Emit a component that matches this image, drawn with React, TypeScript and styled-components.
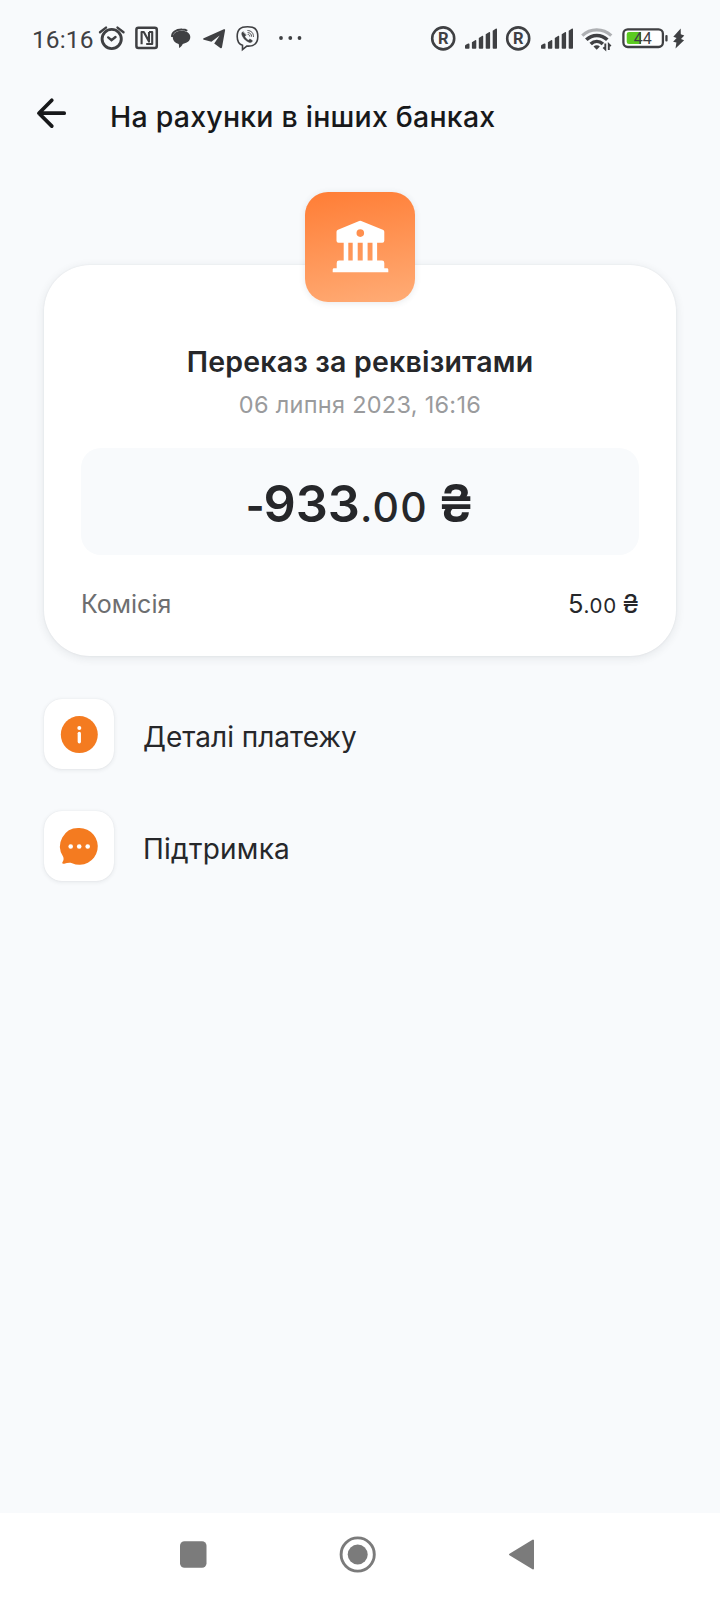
import React from "react";
import styled, { createGlobalStyle } from "styled-components";

const GlobalStyle = createGlobalStyle`
  * { box-sizing: border-box; }
  body { margin: 0; background: #f8fafc; }
`;

const INK = "#3f4043";

const Screen = styled.div`
  display: flex;
  flex-direction: column;
  width: 720px;
  height: 1600px;
  background: #f8fafc;
  font-family: Inter, "Open Sans", sans-serif;
  color: #26272a;
  white-space: nowrap;
`;

const StatusBar = styled.header`
  display: flex;
  height: 76px;
  padding: 24px 34px 0 32px;
  justify-content: space-between;
`;

const StatusGroup = styled.div`
  display: flex;
  align-items: flex-start;
`;

const Clock = styled.span`
  width: 66px;
  padding-top: 1px;
  font: 400 24.5px/29px Roboto, sans-serif;
  letter-spacing: 0.1px;
  color: ${INK};
`;

const Glyph = styled.svg<{ $gap?: number }>`
  display: block;
  flex: none;
  overflow: visible;
  margin-left: ${(p) => p.$gap ?? 0}px;
`;

const AppBar = styled.nav`
  display: flex;
  align-items: flex-start;
  height: 116px;
  padding: 20px 36px 0;
`;

const BackButton = styled.button`
  width: 74px;
  height: 36px;
  padding: 0;
  border: 0;
  background: none;
`;

const PageTitle = styled.h1`
  margin: 3px 0 0;
  font-size: 28.5px;
  line-height: 36px;
  font-weight: 540;
  letter-spacing: 0.22px;
  color: #17181a;
`;

const Content = styled.main`
  flex: 1;
  display: flex;
  flex-direction: column;
  padding: 0 44px;
`;

const BankTile = styled.div`
  align-self: center;
  position: relative;
  z-index: 1;
  width: 110px;
  height: 110px;
  margin-bottom: -37px;
  border-radius: 23px;
  background: linear-gradient(170deg, #ff7d35, #ffac76);
  box-shadow: 0 1px 6px rgba(60, 70, 90, 0.12);
`;

const Card = styled.section`
  display: flex;
  flex-direction: column;
  height: 391px;
  padding: 79px 37px 0;
  border-radius: 46px;
  background: #fff;
  box-shadow: 0 2px 10px rgba(40, 45, 60, 0.1), 0 0 2px rgba(40, 45, 60, 0.08);
`;

const CardTitle = styled.h2`
  margin: 0;
  text-align: center;
  font-size: 28.5px;
  line-height: 36px;
  font-weight: 600;
  letter-spacing: 0.2px;
`;

const DateLine = styled.p`
  margin: 10px 0 0;
  text-align: center;
  font-size: 23.5px;
  line-height: 30px;
  letter-spacing: 0.28px;
  color: #9a9b9d;
`;

const AmountBox = styled.div`
  display: flex;
  justify-content: center;
  align-items: baseline;
  height: 107px;
  margin-top: 28px;
  padding-top: 20px;
  border-radius: 20px;
  background: #f8fafc;
  line-height: 70px;
`;

const Minus = styled.span`
  position: relative;
  top: -2px;
  margin-right: -1px;
  font-size: 40px;
  font-weight: 700;
`;

const Money = styled.span<{ $size: number; $weight: number; $spacing?: number; $gap?: number }>`
  font-size: ${(p) => p.$size}px;
  font-weight: ${(p) => p.$weight};
  letter-spacing: ${(p) => p.$spacing ?? 0}px;
  margin-left: ${(p) => p.$gap ?? 0}px;
`;

const FeeRow = styled.div`
  display: flex;
  justify-content: space-between;
  align-items: baseline;
  margin-top: 31px;
  line-height: 36px;
`;

const FeeLabel = styled.span`
  font-size: 25px;
  color: #6d6e70;
`;

const FeeValue = styled.span`
  display: flex;
  align-items: baseline;
`;

const Actions = styled.ul`
  display: flex;
  flex-direction: column;
  gap: 41px;
  margin: 43px 0 0;
  padding: 0;
  list-style: none;
`;

const Action = styled.li`
  display: flex;
  align-items: center;
  gap: 29px;
  height: 70.5px;
`;

const ActionTile = styled.span`
  width: 70px;
  height: 70px;
  border-radius: 18px;
  background: #fff;
  box-shadow: 0 1px 4px rgba(40, 45, 60, 0.1), 0 0 1px rgba(40, 45, 60, 0.1);
`;

const ActionLabel = styled.span<{ $spacing: number }>`
  padding-top: 6px;
  font-size: 28px;
  line-height: 36px;
  letter-spacing: ${(p) => p.$spacing}px;
`;

const SystemNav = styled.footer`
  display: flex;
  height: 87px;
  padding: 22px 0 0 173px;
  background: #fff;
`;

const Registered = ({ gap }: { gap?: number }) => (
  <Glyph $gap={gap} width="27" height="28">
    <circle cx="14.2" cy="14.4" r="11" fill="none" stroke={INK} strokeWidth="2.6" />
    <text x="14.4" y="20.2" textAnchor="middle" fontFamily="Roboto" fontWeight="700" fontSize="16.5" fill={INK}>R</text>
  </Glyph>
);

const Signal = ({ gap }: { gap: number }) => (
  <Glyph $gap={gap} width="34" height="28" fill={INK}>
    <path d="M1 22q0-.8.8-1.300l2.400-1.200q1.300-.4 1.300 1V24q0 .8-.8.8H1.800Q1 24.800 1 24Z" />
    <path d="M7.900 18.200l3.600-2.200q.8-.2.800.8V24q0 .8-.8.8H8.700q-.8 0-.8-.8ZM14.800 14l3.600-2.200q.8-.2.800.8V24q0 .8-.8.8h-2.800q-.8 0-.8-.8ZM21.700 10.200l3.600-2.200q.8-.2.800.8V24q0 .8-.8.8h-2.800q-.8 0-.8-.8ZM28.700 6.800l3.400-2.200q.9-.2.900.8V24q0 .8-.8.8h-2.700q-.8 0-.8-.8Z" />
  </Glyph>
);

export default function App() {
  return (
    <Screen>
      <GlobalStyle />
      <StatusBar>
        <StatusGroup>
          <Clock>16:16</Clock>
          <Glyph width="28" height="28" fill="none" stroke={INK} strokeLinecap="round">
            <circle cx="13.7" cy="15" r="9.6" strokeWidth="2.9" />
            <path d="M2 8.2 8 3.6M19.5 3.6l6 4.6" strokeWidth="2.4" />
            <path d="m10.2 13.4 3.3 2.8 4-3.2" strokeWidth="2.4" />
          </Glyph>
          <Glyph $gap={8} width="26" height="28" fill="none" stroke={INK}>
            <rect x="2.400" y="3.700" width="20.400" height="20.200" rx="2" strokeWidth="2.500" />
            <path d="M7.600 20.300V8h2.200L15 17.600V8M15 8h3.200v12h-6" strokeWidth="2.100" strokeLinejoin="round" />
          </Glyph>
          <Glyph $gap={10} width="22" height="28">
            <path d="M2 13C1.500 8.600 6 5.300 12 5.500c2.300 0 4 .4 5.300 1.200" fill="none" stroke={INK} strokeWidth="1.800" />
            <path d="M11.500 6.800c5.300 0 8.800 2.600 8.800 6.300 0 4.300-3.800 6.200-7.600 6.800-.6 1.600-1.900 3.200-3.700 4.200.2-1.700 0-2.900-.3-4.200C5 19 2.800 16.600 2.800 13.300c0-3.900 3.700-6.500 8.700-6.500Z" fill={INK} />
          </Glyph>
          <Glyph $gap={10} width="24" height="28" fill={INK}>
            <path d="M1.700 14.200 21.800 5.300c.9-.4 1.500 0 1.300 1l-3.100 17c-.2 1.100-.9 1.300-1.700.7l-6.100-4.600 5.500-7.800-8.300 6.200-7.500-2c-1-.4-1-1.200-.2-1.600Z" />
          </Glyph>
          <Glyph $gap={8} width="26" height="28" fill="none" stroke={INK} strokeLinecap="round">
            <path d="M13.500 2.800c7.600 0 10.300 2.800 10.300 9.600s-2.900 9.600-9.300 9.700h-1.700l-4.300 3.500v-4.300C4.500 20 3.200 17.500 3.200 12.400c0-6.800 2.800-9.600 10.300-9.600Z" strokeWidth="1.600" />
            <path d="M8.700 7.800c-1.700 1.200-.9 3.200.1 5 1.500 2.700 3.800 4.600 6.800 5.700 1.700.6 3-1.200 2.700-1.900L15.900 15l-1.300 1.200c-1.600-.7-3-2-3.800-3.800l1.200-1.300Z" fill={INK} strokeWidth=".5" />
            <path d="M13.800 6.500c3.600.2 5.700 2.400 5.700 6M14 8.600c2.300.2 3.500 1.500 3.600 3.700M14.100 10.500c1.100.1 1.600.6 1.700 1.700" strokeWidth=".9" />
          </Glyph>
          <Glyph $gap={18} width="26" height="28" fill={INK}>
            <circle cx="3" cy="14" r="1.900" />
            <circle cx="12.300" cy="14" r="1.900" />
            <circle cx="21.500" cy="14" r="1.900" />
          </Glyph>
        </StatusGroup>
        <StatusGroup>
          <Registered />
          <Signal gap={8} />
          <Registered gap={6} />
          <Signal gap={9} />
          <Glyph $gap={7} width="32" height="28" fill="none" stroke={INK}>
            <path d="M1.300 11.700C9.300 3.900 22 3.900 30.300 11.700" stroke="#aeb0b3" strokeWidth="3.200" />
            <path d="M5.300 15.800c6-5.800 15-5.800 21 0M9.700 20c3.600-3.400 8.600-3.400 12.200 0" strokeWidth="3.600" />
            <path d="m12.500 22.500 3.200 3.200 3.200-3.200a4.500 4.500 0 0 0-6.400 0Z" fill={INK} stroke="none" />
            <path d="M24.300 19.500v5.800l-2-2M27.800 26v-5.800l2 2" strokeWidth="1.900" />
          </Glyph>
          <Glyph $gap={8} width="48" height="28">
            <rect x="2.400" y="5.300" width="39.500" height="17.700" rx="4.400" fill="#fff" stroke={INK} strokeWidth="2.300" />
            <path d="M8 8h12v12H8a2.300 2.300 0 0 1-2.300-2.300v-7.400A2.300 2.300 0 0 1 8 8Z" fill="#5bcb20" />
            <text x="21.800" y="20" textAnchor="middle" fontFamily="Roboto" fontSize="16" fill={INK}>44</text>
            <rect x="44.300" y="11" width="2.300" height="6.600" rx="1" fill={INK} />
          </Glyph>
          <Glyph $gap={3} width="14" height="28" fill={INK}>
            <path d="M8.700 4.500 1.300 12.800l3.300 1.200-3.500 3.700 3.300.9-.9 5.900 8.600-8.300-3.100-1.200 3.300-3.600-3.500-1.100Z" />
          </Glyph>
        </StatusGroup>
      </StatusBar>

      <AppBar>
        <BackButton aria-label="Назад">
          <Glyph width="34" height="36" fill="none" stroke="#17181a" strokeWidth="3.700" strokeLinecap="round" strokeLinejoin="round">
            <path d="M28.200 17.200H3.200M15.800 4.300 2.900 17.200l12.900 12.900" />
          </Glyph>
        </BackButton>
        <PageTitle>На рахунки в інших банках</PageTitle>
      </AppBar>

      <Content>
        <BankTile>
          <Glyph width="110" height="110" fill="#fff">
            <path fillRule="evenodd" d="M54.200 29.100q1-.5 2 0l21.600 8.600q1.500.6 1.500 2v9q0 2-2 2H33.500q-2 0-2-2v-9q0-1.400 1.500-2ZM55.300 37.300a3.800 3.800 0 1 0 0 7.600 3.800 3.800 0 0 0 0-7.600Z" />
            <path d="M38.700 49h4.600v21h-4.600zM47.700 49h5v21h-5zM57.700 49h4.900v21h-4.900zM67.500 49h4.600v21h-4.600z" />
            <path d="M34 68.600h43q2.300 0 2.300 2.400v5.300h2.700q1.300 0 1.300 1.300v2.700H27.700v-2.700q0-1.300 1.300-1.300h2.700V71q0-2.400 2.300-2.400Z" />
          </Glyph>
        </BankTile>
        <Card>
          <CardTitle>Переказ за реквізитами</CardTitle>
          <DateLine>06 липня 2023, 16:16</DateLine>
          <AmountBox>
            <Minus>-</Minus>
            <Money $size={50.5} $weight={600}>933</Money>
            <Money $size={41} $weight={540} $spacing={1.3}>.00</Money>
            <Money $size={51.5} $weight={600} $gap={10}>₴</Money>
          </AmountBox>
          <FeeRow>
            <FeeLabel>Комісія</FeeLabel>
            <FeeValue>
              <Money $size={25.5} $weight={400}>5</Money>
              <Money $size={20.5} $weight={400} $spacing={0.8}>.00</Money>
              <Money $size={26} $weight={400} $gap={5.5}>₴</Money>
            </FeeValue>
          </FeeRow>
        </Card>

        <Actions>
          <Action>
            <ActionTile>
              <Glyph width="70" height="70">
                <circle cx="35.300" cy="35.600" r="18.500" fill="#f47b20" />
                <circle cx="35.300" cy="29" r="2" fill="#fff" />
                <path d="M35.300 34.300v8.500" stroke="#fff" strokeWidth="3.300" strokeLinecap="round" />
              </Glyph>
            </ActionTile>
            <ActionLabel $spacing={0}>Деталі платежу</ActionLabel>
          </Action>
          <Action>
            <ActionTile>
              <Glyph width="70" height="70">
                <path d="M35.300 17a18.400 18.400 0 1 1-7.200 35.300c-2.600-.9-5.100-.2-7.900.4-2 .4-2.400-.6-1.500-1.900.8-1.300 1.200-3 .6-4.900A18.400 18.400 0 0 1 35.300 17Z" fill="#f47b20" />
                <circle cx="26.700" cy="35.500" r="2.300" fill="#fff" />
                <circle cx="35.200" cy="35.500" r="2.300" fill="#fff" />
                <circle cx="43.700" cy="35.500" r="2.300" fill="#fff" />
              </Glyph>
            </ActionTile>
            <ActionLabel $spacing={0.25}>Підтримка</ActionLabel>
          </Action>
        </Actions>
      </Content>

      <SystemNav>
        <Glyph width="40" height="40" fill="#7b7b7b">
          <rect x="7" y="6.300" width="26.500" height="26.500" rx="4.500" />
        </Glyph>
        <Glyph $gap={124} width="42" height="40" fill="#7b7b7b">
          <circle cx="20.700" cy="19.500" r="16.600" fill="none" stroke="#7b7b7b" strokeWidth="2.900" />
          <circle cx="20.700" cy="19.500" r="10" />
        </Glyph>
        <Glyph $gap={127} width="34" height="40" fill="#7b7b7b" stroke="#7b7b7b" strokeWidth="2" strokeLinejoin="round">
          <path d="M27 5.500v28L4 19.500Z" />
        </Glyph>
      </SystemNav>
    </Screen>
  );
}
